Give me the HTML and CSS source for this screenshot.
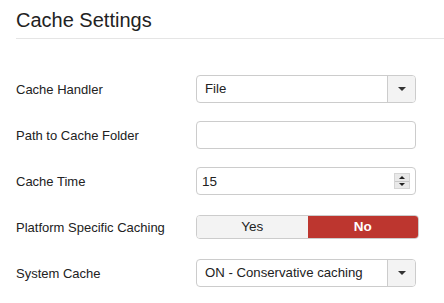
FILE: index.html
```html
<!DOCTYPE html>
<html lang="en">
<head>
    <meta charset="UTF-8">
    <meta name="viewport" content="width=device-width, initial-scale=1.0">
    <title>Cache Settings</title>
    <link rel="stylesheet" href="styles.css">
</head>
<body>
    <header>
        <h2>Cache Settings</h2>
    </header>

    <div class="form">
        <div class="row">
            <label>Cache Handler</label>
            <div class="select">
                <span class="select-value">File</span>
                <span class="caret-box"><span class="caret"></span></span>
            </div>
        </div>
        <div class="row">
            <label>Path to Cache Folder</label>
            <input type="text" class="text-input">
        </div>
        <div class="row">
            <label>Cache Time</label>
            <div class="number-input">
                <span class="number-value">15</span>
                <span class="spinner">
                    <span class="spin-up"></span>
                    <span class="spin-down"></span>
                </span>
            </div>
        </div>
        <div class="row">
            <label>Platform Specific Caching</label>
            <div class="toggle">
                <span class="toggle-btn">Yes</span>
                <span class="toggle-btn active">No</span>
            </div>
        </div>
        <div class="row">
            <label>System Cache</label>
            <div class="select">
                <span class="select-value">ON - Conservative caching</span>
                <span class="caret-box"><span class="caret"></span></span>
            </div>
        </div>
    </div>
</body>
</html>
```

FILE: styles.css
```css
* {
    margin: 0;
    padding: 0;
    box-sizing: border-box;
}
body {
    font-family: "Liberation Sans", Arial, sans-serif;
    font-size: 13px;
    color: #222;
    background-color: #fff;
    padding-left: 16px;
}
header {
    padding-top: 8px;
    padding-bottom: 6px;
    border-bottom: 1px solid #e5e5e5;
}
h2 {
    font-size: 20px;
    font-weight: normal;
    line-height: 24px;
    color: #222;
}
.form {
    display: flex;
    flex-direction: column;
    gap: 18px;
    margin-top: 36px;
}
.row {
    display: grid;
    grid-template-columns: 180px 220px;
    align-items: center;
    height: 28px;
}
.select {
    display: flex;
    height: 28px;
    border: 1px solid #ccc;
    border-radius: 4px;
    overflow: hidden;
}
.select-value {
    flex: 1;
    padding-left: 8px;
    line-height: 26px;
    font-size: 13.2px;
}
.caret-box {
    width: 28px;
    display: flex;
    align-items: center;
    justify-content: center;
    background-color: #f3f3f3;
    border-left: 1px solid #ccc;
}
.caret {
    width: 0;
    height: 0;
    border-left: 4px solid transparent;
    border-right: 4px solid transparent;
    border-top: 4px solid #333;
}
.text-input {
    height: 28px;
    border: 1px solid #ccc;
    border-radius: 4px;
    padding: 0 6px;
    font: inherit;
}
.number-input {
    display: flex;
    align-items: center;
    height: 28px;
    border: 1px solid #ccc;
    border-radius: 4px;
    padding: 0 5px;
    font-size: 13.5px;
}
.number-value {
    flex: 1;
}
.spinner {
    display: flex;
    flex-direction: column;
    width: 16px;
    height: 16px;
    border: 1px solid #d5d5d5;
    background-color: #e9e9e9;
}
.spin-up,
.spin-down {
    flex: 1;
    display: flex;
    align-items: center;
    justify-content: center;
}
.spin-up {
    border-bottom: 1px solid #c8c8c8;
}
.spin-up:after {
    content: '';
    border-left: 3px solid transparent;
    border-right: 3px solid transparent;
    border-bottom: 3px solid #222;
}
.spin-down:after {
    content: '';
    border-left: 3px solid transparent;
    border-right: 3px solid transparent;
    border-top: 3px solid #222;
}
.toggle {
    display: flex;
    width: 223px;
    height: 24px;
    border: 1px solid #ccc;
    border-radius: 4px;
    overflow: hidden;
}
.toggle-btn {
    flex: 1;
    text-align: center;
    line-height: 22px;
    background-color: #f3f3f3;
    color: #222;
    font-size: 13.5px;
}
.toggle-btn.active {
    background-color: #bd362f;
    color: #fff;
    font-weight: bold;
}
```
